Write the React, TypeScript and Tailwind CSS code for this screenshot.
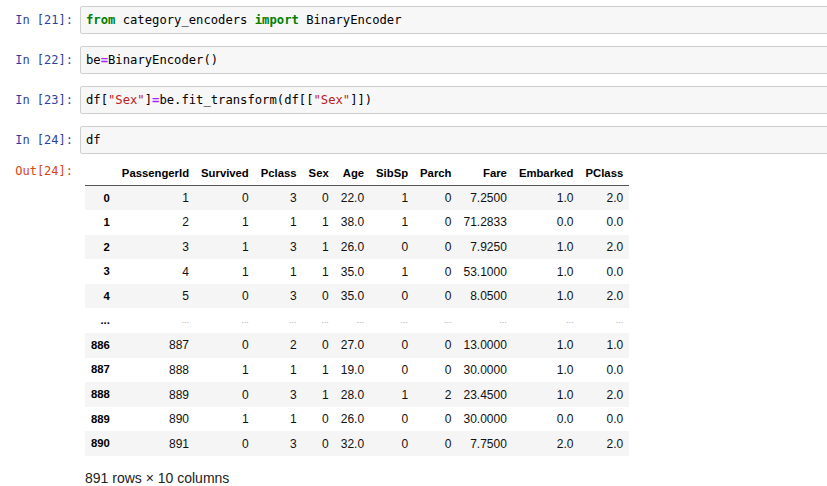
import React from 'react';

const mono = "font-['DejaVu_Sans_Mono','Liberation_Mono',monospace]";

const columns = ['PassengerId', 'Survived', 'Pclass', 'Sex', 'Age', 'SibSp', 'Parch', 'Fare', 'Embarked', 'PClass'];

const rows: (string | null)[][] = [
  ['0', '1', '0', '3', '0', '22.0', '1', '0', '7.2500', '1.0', '2.0'],
  ['1', '2', '1', '1', '1', '38.0', '1', '0', '71.2833', '0.0', '0.0'],
  ['2', '3', '1', '3', '1', '26.0', '0', '0', '7.9250', '1.0', '2.0'],
  ['3', '4', '1', '1', '1', '35.0', '1', '0', '53.1000', '1.0', '0.0'],
  ['4', '5', '0', '3', '0', '35.0', '0', '0', '8.0500', '1.0', '2.0'],
  null,
  ['886', '887', '0', '2', '0', '27.0', '0', '0', '13.0000', '1.0', '1.0'],
  ['887', '888', '1', '1', '1', '19.0', '0', '0', '30.0000', '1.0', '0.0'],
  ['888', '889', '0', '3', '1', '28.0', '1', '2', '23.4500', '1.0', '2.0'],
  ['889', '890', '1', '1', '0', '26.0', '0', '0', '30.0000', '0.0', '0.0'],
  ['890', '891', '0', '3', '0', '32.0', '0', '0', '7.7500', '2.0', '2.0'],
];

const InputCell: React.FC<{ n: number; children: React.ReactNode }> = ({ n, children }) => (
  <div className="flex items-center mb-[12px]">
    <div className={`${mono} w-[80px] pr-[7px] text-right text-[12px] text-[#303f9f] shrink-0`}>In [{n}]:</div>
    <div className={`${mono} flex-1 -mr-[20px] h-[28px] flex items-center pl-[5px] bg-[#f7f7f7] border border-[#cfcfcf] rounded-[2px] text-[12.2px] text-black whitespace-pre`}>
      {children}
    </div>
  </div>
);

const kw = 'text-[#008000] font-bold';
const op = 'text-[#aa22ff] font-bold';
const str = 'text-[#ba2121]';

export default function App() {
  return (
    <div className="w-[827px] h-[486px] overflow-hidden bg-white pt-[6px]">
      <InputCell n={21}>
        <span className={kw}>from</span> category_encoders <span className={kw}>import</span> BinaryEncoder
      </InputCell>
      <InputCell n={22}>
        be<span className={op}>=</span>BinaryEncoder()
      </InputCell>
      <InputCell n={23}>
        df[<span className={str}>"Sex"</span>]<span className={op}>=</span>be.fit_transform(df[[<span className={str}>"Sex"</span>]])
      </InputCell>
      <InputCell n={24}>df</InputCell>

      {/* output area */}
      <div className="flex -mt-[5px]">
        <div className={`${mono} w-[80px] pr-[7px] pt-[1px] text-right text-[12px] text-[#d84315] shrink-0`}>Out[24]:</div>
        <div className="ml-[5px] font-['Liberation_Sans',Arial,sans-serif] text-[12px] text-black">
          <table className="border-collapse">
            <thead>
              <tr className="h-[24.5px] border-b border-[#555]">
                <th className="px-[6px]"></th>
                {columns.map((c) => (
                  <th key={c} className="px-[6px] text-right font-bold text-[11.3px]">{c}</th>
                ))}
              </tr>
            </thead>
            <tbody>
              {rows.map((r, i) => (
                <tr key={i} className={`h-[24.6px] ${i % 2 === 0 ? 'bg-[#f5f5f5]' : 'bg-white'}`}>
                  {r ? (
                    <>
                      <th className="px-[6px] text-right font-bold text-[11.3px]">{r[0]}</th>
                      {r.slice(1).map((v, j) => (
                        <td key={j} className="px-[6px] text-right text-[#111]">{v}</td>
                      ))}
                    </>
                  ) : (
                    <>
                      <th className="px-[6px] text-right font-bold text-[11.3px]">...</th>
                      {columns.map((c) => (
                        <td key={c} className="px-[6px] text-right text-[#aaa] text-[9px]">...</td>
                      ))}
                    </>
                  )}
                </tr>
              ))}
            </tbody>
          </table>
          <p className="mt-[12px] text-[14px] text-[#222]">891 rows × 10 columns</p>
        </div>
      </div>
    </div>
  );
}
